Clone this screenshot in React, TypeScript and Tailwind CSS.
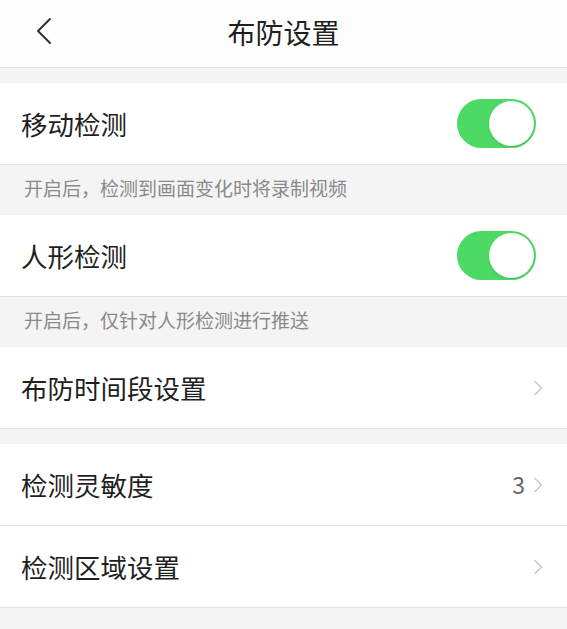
import React, { useState } from 'react';

const font = { fontFamily: '"Noto Sans CJK SC", "Noto Sans", sans-serif' };

// 开关
const Toggle: React.FC<{ on: boolean; onChange: () => void }> = ({ on, onChange }) => (
  <button
    onClick={onChange}
    className={`relative mr-[8px] w-[79px] h-[49px] rounded-full transition-colors ${on ? 'bg-[#4cd964]' : 'bg-[#e5e5e5]'}`}
  >
    <span
      className={`absolute top-[2px] w-[45px] h-[45px] rounded-full bg-white shadow-[0_1px_2px_rgba(0,0,0,0.15)] transition-all ${on ? 'left-[32px]' : 'left-[2px]'}`}
    />
  </button>
);

const Chevron = () => (
  <svg width="11" height="16" viewBox="0 0 11 16" fill="none">
    <path d="M2 1.5 L8.5 8 L2 14.5" stroke="#c9c9c9" strokeWidth="1.6" strokeLinecap="round" strokeLinejoin="round" />
  </svg>
);

const Row: React.FC<{ label: string; right?: React.ReactNode }> = ({ label, right }) => (
  <div className="h-[82px] bg-white border-b border-[#e2e2e2] flex items-center justify-between pl-[21px] pr-[23px]">
    <span className="text-[26.5px] text-[#1f1f1f]">{label}</span>
    {right}
  </div>
);

const Caption: React.FC<{ text: string }> = ({ text }) => (
  <div className="h-[50px] flex items-center pl-[24px] pb-[3px]">
    <span className="text-[19px] text-[#8a8a8a]">{text}</span>
  </div>
);

export default function App() {
  const [motion, setMotion] = useState(true);
  const [human, setHuman] = useState(true);

  return (
    <div className="w-[567px] h-[629px] bg-[#f4f4f4] overflow-hidden" style={font}>
      {/* 顶部导航 */}
      <div className="relative h-[68px] bg-[#fdfdfd] border-b border-[#e0e0e0] flex items-center justify-center">
        <svg className="absolute left-[35px] top-[17px]" width="20" height="28" viewBox="0 0 20 28" fill="none">
          <path d="M15 2 L3 14 L15 26" stroke="#333" strokeWidth="2" strokeLinecap="round" strokeLinejoin="round" />
        </svg>
        <span className="text-[28px] text-[#1f1f1f] pb-[4px]">布防设置</span>
      </div>

      <div className="h-[15px]" />

      <Row label="移动检测" right={<Toggle on={motion} onChange={() => setMotion(!motion)} />} />
      <Caption text="开启后，检测到画面变化时将录制视频" />

      <Row label="人形检测" right={<Toggle on={human} onChange={() => setHuman(!human)} />} />
      <Caption text="开启后，仅针对人形检测进行推送" />

      <Row label="布防时间段设置" right={<Chevron />} />

      <div className="h-[15px]" />

      <Row
        label="检测灵敏度"
        right={
          <div className="flex items-center gap-[8px]">
            <span className="text-[23px] text-[#666]">3</span>
            <Chevron />
          </div>
        }
      />
      <Row label="检测区域设置" right={<Chevron />} />
    </div>
  );
}
